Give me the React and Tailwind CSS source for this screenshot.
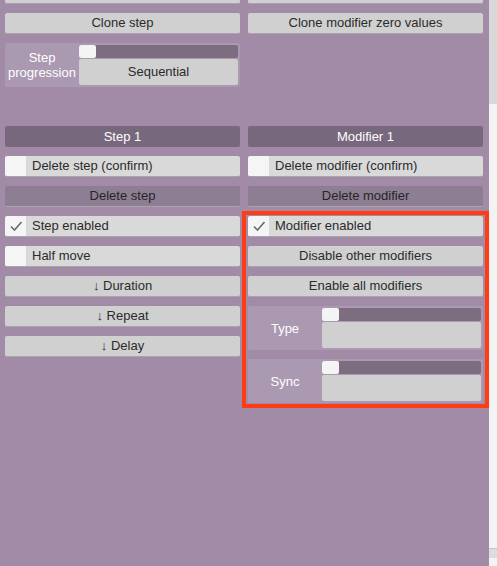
import React from 'react';

const font = { fontFamily: '"Liberation Sans", Arial, sans-serif' };

function Button({ label, dark }) {
  return (
    <div className={`h-[21px] flex items-center justify-center rounded-[2px] text-[13px] border-b border-[#a9a3ab] ${dark ? 'bg-[#8d7e93] text-[#262626]' : 'bg-[#d0d0d0] text-[#2b2b2b]'}`}>
      {label}
    </div>
  );
}

function Header({ label }) {
  return (
    <div className="h-[21px] flex items-center justify-center rounded-[2px] bg-[#77687d] text-white text-[13px]">
      {label}
    </div>
  );
}

function Toggle({ label, checked }) {
  return (
    <div className="h-[21px] flex rounded-[2px] overflow-hidden border-b border-[#a9a3ab]">
      <div className="w-[21px] bg-[#f5f5f5] flex items-center justify-center">
        {checked && (
          <svg width="14" height="12" viewBox="0 0 14 12">
            <path d="M2 6.5 L5.5 10 L12.5 2" fill="none" stroke="#6b6b6b" strokeWidth="1.6" />
          </svg>
        )}
      </div>
      <div className="flex-1 bg-[#d9d9d9] flex items-center pl-[6px] text-[13px] text-[#2b2b2b]">{label}</div>
    </div>
  );
}

function Selector({ label, value }) {
  return (
    <div className="h-[44px] flex bg-[#ab99b1] rounded-[2px]">
      <div className="w-[74px] flex items-center justify-center text-center text-white text-[13px] leading-[15px]">{label}</div>
      <div className="flex-1 flex flex-col pr-[2px] pt-[2px] gap-[1px]">
        <div className="h-[13px] bg-[#7c6d81] rounded-[2px] flex">
          <div className="w-[17px] h-full bg-[#f4f4f4] rounded-[2px]" />
        </div>
        <div className="h-[26px] bg-[#d0d0d0] rounded-[2px] flex items-center justify-center text-[13px] text-[#2b2b2b]">{value}</div>
      </div>
    </div>
  );
}

export default function App() {
  return (
    <div style={font} className="w-[497px] h-[566px] flex overflow-hidden bg-[#a18ba7] relative">
      <div className="flex-1 flex gap-[8px] pl-[5px] mt-[-17px]">
        <div className="w-[235px] flex flex-col gap-[9px]">
          <Button label="" />
          <Button label="Clone step" />
          <Selector label={<span>Step<br />progression</span>} value="Sequential" />
          <div className="h-[21px]" />
          <Header label="Step 1" />
          <Toggle label="Delete step (confirm)" />
          <Button label="Delete step" dark />
          <Toggle label="Step enabled" checked />
          <Toggle label="Half move" />
          <Button label="↓ Duration" />
          <Button label="↓ Repeat" />
          <Button label="↓ Delay" />
        </div>
        <div className="w-[235px] flex flex-col gap-[9px]">
          <Button label="" />
          <Button label="Clone modifier zero values" />
          <div className="h-[74px]" />
          <Header label="Modifier 1" />
          <Toggle label="Delete modifier (confirm)" />
          <Button label="Delete modifier" dark />
          <Toggle label="Modifier enabled" checked />
          <Button label="Disable other modifiers" />
          <Button label="Enable all modifiers" />
          <Selector label="Type" value="" />
          <Selector label="Sync" value="" />
        </div>
      </div>
      <div className="w-[8px] flex flex-col bg-[#f3f3f3]">
        <div className="h-[104px] bg-[#d9d9d9]" />
        <div className="flex-1" />
        <div className="h-[10px] bg-[#dcdcdc] border-t border-[#c4c4c4] mb-[8px]" />
      </div>
      <div className="absolute left-[242px] top-[211px] w-[247px] h-[197px] border-4 border-[#ff3c12]" />
    </div>
  );
}
